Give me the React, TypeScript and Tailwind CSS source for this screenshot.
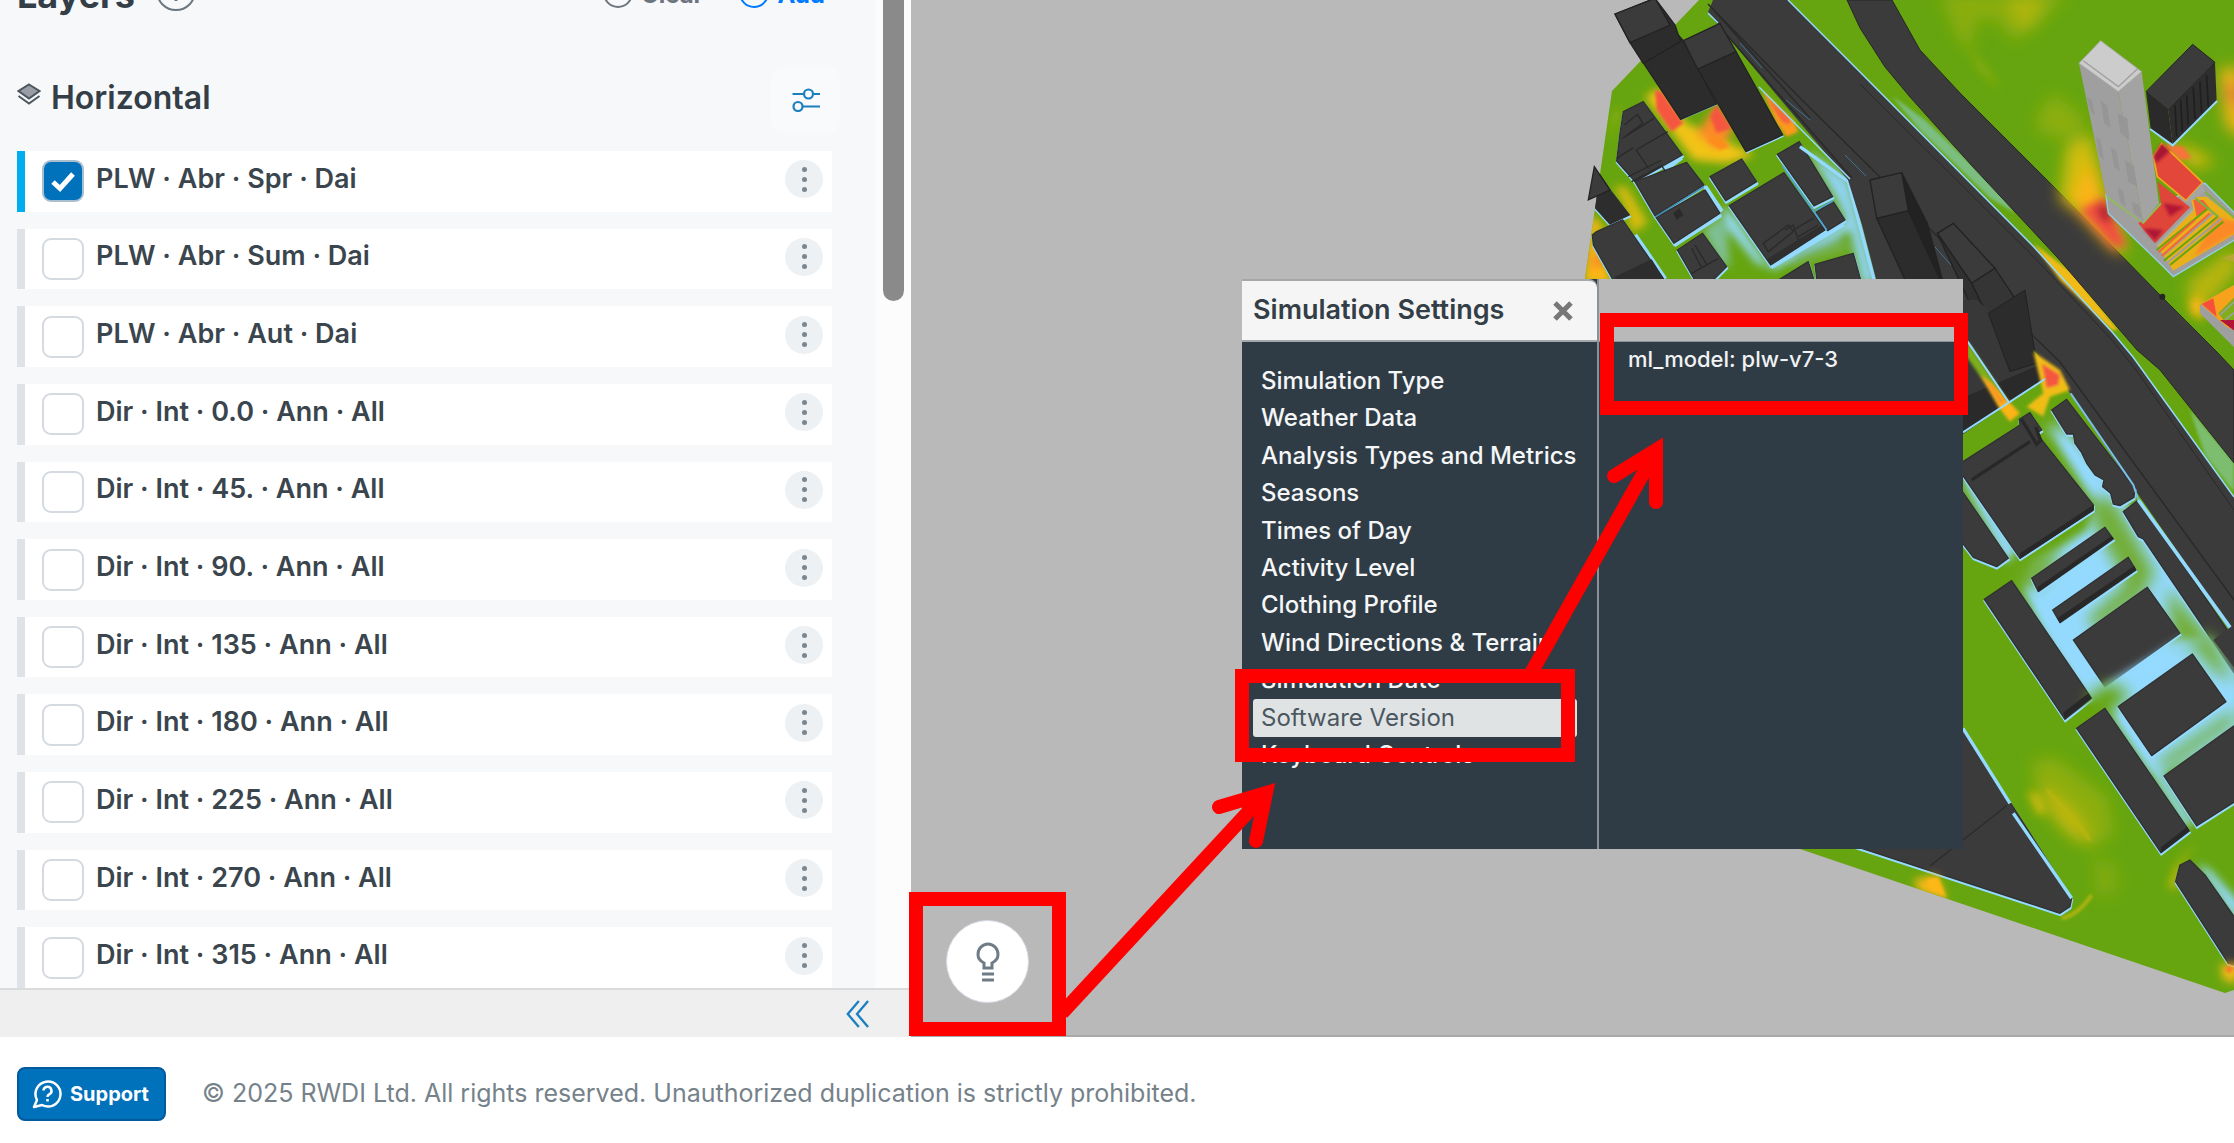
import React, { useState } from 'react';

interface Layer {
  id: string;
  label: string;
}

const LAYERS: Layer[] = [
  { id: 'plw-spr', label: 'PLW · Abr · Spr · Dai' },
  { id: 'plw-sum', label: 'PLW · Abr · Sum · Dai' },
  { id: 'plw-aut', label: 'PLW · Abr · Aut · Dai' },
  { id: 'dir-0', label: 'Dir · Int · 0.0 · Ann · All' },
  { id: 'dir-45', label: 'Dir · Int · 45. · Ann · All' },
  { id: 'dir-90', label: 'Dir · Int · 90. · Ann · All' },
  { id: 'dir-135', label: 'Dir · Int · 135 · Ann · All' },
  { id: 'dir-180', label: 'Dir · Int · 180 · Ann · All' },
  { id: 'dir-225', label: 'Dir · Int · 225 · Ann · All' },
  { id: 'dir-270', label: 'Dir · Int · 270 · Ann · All' },
  { id: 'dir-315', label: 'Dir · Int · 315 · Ann · All' },
];

const SETTINGS = [
  'Simulation Type',
  'Weather Data',
  'Analysis Types and Metrics',
  'Seasons',
  'Times of Day',
  'Activity Level',
  'Clothing Profile',
  'Wind Directions & Terrain',
  'Simulation Date',
  'Software Version',
  'Keyboard Controls',
];

// Building footprints, grouped by city quarter
const NORTH_WEST = [
  '190,335 250,305 367,465 225,545 170,483 180,400',
  '225,545 380,487 432,555 285,648',
  '288,652 435,570 480,640 342,730',
  '450,530 545,477 590,545 497,602',
  '508,617 672,518 795,690 632,795',
  '652,463 718,425 818,590 762,618',
  '768,637 820,605 855,660 803,692',
  '352,750 428,700 500,800 450,850 410,850',
  '103,500 150,570 208,645 150,672 85,600',
  '97,705 110,695 188,660 320,850 165,850 100,735',
  '640,850 745,785 765,850',
  '765,793 880,760 905,850 772,850',
];

const SOUTH_EAST = [
  '189,485 360,375 358,358 390,338 425,390 410,400 580,615 580,630 360,775 170,500',
  '455,330 500,298 705,565 702,592 660,617 640,612 632,580 608,560 612,540 585,525 560,490 545,458 525,430 520,402 500,402',
  '150,520 325,775 290,800 220,772 150,680',
  '395,835 615,682 640,717 415,875',
  '458,930 685,772 708,810 480,968',
  '670,635 715,600 1010,1030 1010,1130 730,717 715,710',
  '520,1020 742,862 840,1000 615,1160',
  '253,898 335,842 575,1195 495,1258',
];

const SOUTH = [
  '1015,200 1237,42 1338,185 1115,347',
  '1152,408 1380,245 1380,475 1250,558',
  '890,265 975,205 1228,573 1143,638',
  '1187,725 1200,675 1230,660 1275,705 1380,855 1380,980 1345,970',
  '500,190 875,775 870,800 840,820 220,617',
];

// The calm-air fringe falls to the lower side of each building
const Blocks = ({ items }: { items: string[] }) => (
  <>
    <g fill="#94daff" stroke="#94daff" strokeWidth="7" filter="url(#edge)" transform="translate(1 5)">
      {items.map((p) => (
        <polygon key={p} points={p} />
      ))}
    </g>
    <g fill="#3b3b3b" stroke="#303030" strokeWidth="4" strokeLinejoin="round">
      {items.map((p) => (
        <polygon key={p} points={p} />
      ))}
    </g>
  </>
);

const CityMap = () => (
  <svg
    className="absolute inset-0 h-full w-full"
    viewBox="911 0 1323 1037"
    preserveAspectRatio="xMaxYMin slice"
    aria-hidden="true"
  >
    <defs>
      <filter id="edge" x="-5%" y="-5%" width="110%" height="110%">
        <feGaussianBlur stdDeviation="2" />
      </filter>
      <filter id="soft" x="-30%" y="-30%" width="160%" height="160%">
        <feGaussianBlur stdDeviation="5" />
      </filter>
      <filter id="streak" x="-30%" y="-30%" width="160%" height="160%">
        <feGaussianBlur stdDeviation="1.5" />
      </filter>
      <filter id="blur" x="-50%" y="-50%" width="200%" height="200%">
        <feGaussianBlur stdDeviation="13" />
      </filter>
      <filter id="haze" x="-50%" y="-50%" width="200%" height="200%">
        <feGaussianBlur stdDeviation="22" />
      </filter>
      <clipPath id="site">
        <polygon points="1699,0 1675,25 1612,91 1585,278 1580,500 1700,815 1800,849 2225,993 2234,990 2234,0" />
      </clipPath>
    </defs>

    <g clipPath="url(#site)">
      <rect x="1560" y="0" width="674" height="1037" fill="#66a50f" />

      {/* north west quarter */}
      <g transform="translate(1560 0) scale(0.3333)">
        <g filter="url(#blur)">
          <polygon points="745,450 865,540 950,850 905,850 870,690 830,600" fill="#8fd3ee" />
          <polygon points="800,700 860,660 870,690 640,810 620,790" fill="#94daff" />
          <polygon points="485,620 515,640 625,800 590,790 500,680" fill="#94daff" />
          <polygon points="430,690 480,650 500,690 510,800 480,790" fill="#7fbf95" />
          <polygon points="700,765 840,710 870,750 700,800" fill="#74b148" />
          <polygon points="255,290 300,265 380,370 470,410 585,465 500,490 400,480 340,400" fill="#f3c313" />
          <polygon points="470,315 520,395 470,450 410,400" fill="#fb8a28" />
          <polygon points="160,560 200,560 265,670 215,700 190,610" fill="#d7bb10" />
          <polygon points="90,640 140,690 100,700 160,850 70,850" fill="#fdb813" />
          <polygon points="95,750 130,790 100,810" fill="#fb7a2c" />
          <polygon points="155,340 190,320 160,400 150,430" fill="#86ab0f" />
        </g>
        <g filter="url(#soft)">
          <polygon points="285,270 305,275 370,370 335,395 290,330" fill="#f4573f" />
          <polygon points="468,315 515,385 470,400 450,350" fill="#f4573f" />
          <polygon points="440,420 475,405 510,440 480,450" fill="#fd8d1f" />
          <polygon points="605,270 700,360 715,395 680,410 650,370" fill="#fb9a1e" />
          <polygon points="618,290 690,355 690,375 665,365" fill="#f4663a" />
        </g>
        <polyline points="365,357 470,313" stroke="#94daff" strokeWidth="5" />
        <polyline points="558,457 670,407" stroke="#94daff" strokeWidth="7" />
        <polyline points="312,512 365,472" stroke="#94daff" strokeWidth="14" />
        <polyline points="342,735 482,645" stroke="#94daff" strokeWidth="14" />
        <polyline points="497,606 592,549" stroke="#94daff" strokeWidth="12" />
        <polyline points="632,800 850,672" stroke="#94daff" strokeWidth="16" />
        <polyline points="435,560 485,635" stroke="#94daff" strokeWidth="14" filter="url(#edge)" />
        <polyline points="225,705 315,837" stroke="#94daff" strokeWidth="14" filter="url(#edge)" />
        <Blocks items={NORTH_WEST} />
        <g fill="none" stroke="#2a2a2a" strokeWidth="4">
          <path d="M187 415l95-60M193 375l40-32 15 27-60 45M228 450l95-55M228 450l38 55M170 475l50-32M215 545l90-48 12 18M205 530l100-50" />
          <path d="M610 730l75-55 15 20-75 60zM675 690l25-15 15 45M700 690l60-35M715 710l60-35" />
          <path d="M395 745l30 58M405 735l35 58M395 820l80-45" />
        </g>
        <polygon points="340,640 358,625 370,645 350,660" fill="#2a2a2a" />
        <polygon points="620,778 785,676 795,690 632,795" fill="#2f2f2f" />
        <polygon points="85,600 145,566 208,645 150,672" fill="#2d2d2d" />
        <polygon points="165,830 275,778 320,850 165,850" fill="#2d2d2d" />
        <polyline points="288,650 432,560" stroke="#3f8db5" strokeWidth="4" />
        <polyline points="668,498 800,690" stroke="#4ea7d8" strokeWidth="5" />
        <polyline points="765,632 820,602" stroke="#4ea7d8" strokeWidth="5" />
        <polyline points="720,440 865,545 945,850" fill="none" stroke="#94daff" strokeWidth="10" />
      </g>

      {/* rail corridor and main road */}
      <polygon
        points="1713,0 1788,0 1860,72 2032,245 2113,333 2133,357 2234,497 2234,633 2133,487 2070,393 2033,350 1963,400 1900,300 1876,279 1862,225 1848,180 1718,25 1708,12"
        fill="#3b3b3b"
      />
      <g fill="none" stroke="#2a2a2a" strokeWidth="1.500">
        <path d="M1708 4L1800 98 1880 177M1718 25L1852 178M1712 8L1760 62 1810 118" />
        <path d="M1860 84L2030 253 2112 340 2136 370 2234 510" strokeWidth="1" />
        <path d="M2025 328L2060 362 2234 600" />
        <path d="M1928 227L2000 300" />
      </g>
      <path d="M1740 43L1762 68M1786 100L1810 120M1845 155L1866 176M1935 247L1951 265" stroke="#3f7390" strokeWidth="1" fill="none" />
      <path d="M1708 13L1718 23M1759 87L1850 179" stroke="#94daff" strokeWidth="1.500" fill="none" />
      <g filter="url(#streak)">
        <polygon points="1892,96 1925,120 2000,192 2015,213 1990,198 1920,130" fill="#7cbd80" />
        <polygon points="2033,243 2075,275 2118,330 2112,330 2060,280" fill="#f0bb12" />
        <polygon points="2190,410 2234,462 2234,492 2205,455" fill="#7cbd70" />
      </g>
      <polygon
        points="1847,0 1892,0 1920,50 1960,93 2067,200 2160,295 2215,350 2234,370 2234,463 2160,370 2137,350 2057,257 1973,167 1910,97 1885,67 1860,28"
        fill="#3b3b3b"
        stroke="#272727"
        strokeWidth="1"
      />
      <polyline points="1788,0 1860,72 2032,245 2113,333 2133,357 2234,497" fill="none" stroke="#94daff" strokeWidth="1.500" />

      {/* twin towers */}
      <g transform="translate(1560 0) scale(0.3333)" stroke="#232323" strokeWidth="4" strokeLinejoin="round">
        <polygon points="210,128 328,75 370,122 470,312 362,358" fill="#2c2c2c" />
        <polygon points="165,42 285,-5 330,75 210,128" fill="#3b3b3b" />
        <polygon points="413,207 528,155 668,405 558,455" fill="#2c2c2c" />
        <polygon points="370,122 480,70 528,155 413,207" fill="#3b3b3b" />
      </g>

      {/* park haze and landmark tower */}
      <g transform="translate(1860 0) scale(0.3333)">
        <g filter="url(#haze)">
          <polygon points="240,-20 620,-20 520,90 460,120 410,60 350,60 330,150 290,110" fill="#8aad10" />
          <polygon points="440,0 550,-20 530,60 480,90" fill="#adb60f" />
          <polygon points="530,350 580,280 680,360 640,420 540,400" fill="#8bae10" />
          <polygon points="620,440 690,400 740,590 660,640 600,600" fill="#d2bd0e" />
          <polygon points="690,480 730,590 800,760 760,750 630,610" fill="#fdb414" />
          <polygon points="1080,210 1140,200 1160,420 1100,380" fill="#fbb515" />
          <polygon points="1085,260 1150,260 1140,330" fill="#f4663a" />
          <polygon points="920,430 1000,450 1070,490 1000,500" fill="#e8bd10" />
          <polygon points="980,850 1120,740 1140,800 1040,920 1000,950" fill="#b9b50f" />
        </g>
        <g filter="url(#blur)">
          <polygon points="660,630 735,590 800,740 760,740" fill="#f0503f" />
          <polygon points="710,620 740,610 760,670 725,660" fill="#ad1233" />
          <polygon points="290,60 340,160 390,215 420,270 350,200" fill="#8aad10" />
          <polygon points="990,900 1025,890 1030,960 995,940" fill="#fdb813" />
        </g>
        <polygon points="910,432 970,440 995,475 960,480" fill="#f7733a" filter="url(#soft)" />
        <polyline points="872,385 938,434 1070,302" fill="none" stroke="#94daff" strokeWidth="10" />
        <polygon points="858,275 925,330 938,432 872,385" fill="#2a2a2a" />
        <polygon points="925,330 1065,187 1070,300 938,432" fill="#2e2e2e" />
        <path d="M945 315l5 95M962 300l5 95M980 285l5 90M1000 262l5 95M1020 245l5 95M1040 225l5 95" stroke="#1f1f1f" strokeWidth="5" />
        <polygon points="858,275 998,133 1065,187 925,330" fill="#3b3b3b" stroke="#232323" strokeWidth="3" />

        <polygon points="738,585 850,668 990,560 1035,550 1140,655 1140,710 940,830 900,790 745,640" fill="#9f9f9f" stroke="#8fd0e8" strokeWidth="4" />
        <polygon points="890,735 1000,625 990,590 1040,590 1135,665 1135,695 940,812" fill="#e9b01a" />
        <polygon points="1070,650 1140,670 1140,690 1000,770" fill="#fb8a28" filter="url(#soft)" />
        <polygon points="1000,600 1030,600 1050,625 1010,650" fill="#f4603c" />
        <g strokeWidth="6" fill="none">
          <path d="M900 775L1060 640M920 790L1085 655" stroke="#9f9f9f" />
          <path d="M890 750L1045 625M912 782L1075 648M930 795L1090 665" stroke="#66a50f" />
          <path d="M895 757L1005 660M905 768L1050 640" stroke="#f4663a" />
          <path d="M892 737L1000 628" stroke="#9fb0b0" />
          <path d="M1000 590L1075 650M1035 575L1130 660" stroke="#7fb040" />
        </g>
        <polygon points="905,430 1028,548 978,602 892,530 880,468" fill="#e2473a" stroke="#f3a91b" strokeWidth="5" />
        <polygon points="905,430 930,452 890,490 880,468" fill="#a81535" filter="url(#soft)" />
        <polygon points="1028,548 1035,575 985,608 978,602" fill="#a5a5a5" />
        <polygon points="893,545 990,622 885,730 835,670 903,610" fill="#e0453a" />
        <polygon points="910,610 975,620 930,650" fill="#b21836" filter="url(#soft)" />
        <polygon points="850,685 910,690 885,722" fill="#ad1635" filter="url(#soft)" />
        <polyline points="740,590 850,668 903,610" fill="none" stroke="#8fc04a" strokeWidth="6" />

        <polygon points="657,190 775,275 850,668 738,585" fill="#9f9f9f" />
        <polygon points="775,275 845,215 897,610 850,668" fill="#a3a3a3" />
        <g fill="#969696">
          <polygon points="722,300 742,318 752,385 732,368" />
          <polygon points="772,340 802,355 808,420 782,400" />
          <polygon points="752,440 770,455 780,515 762,500" />
          <polygon points="795,480 822,498 832,560 805,545" />
          <polygon points="773,560 790,575 798,620 780,605" />
          <polygon points="815,605 838,615 845,655 822,640" />
          <polygon points="680,290 695,300 705,345 692,335" />
          <polygon points="708,410 722,420 732,480 718,468" />
        </g>
        <polygon points="657,190 722,122 845,215 775,275" fill="#cccccc" stroke="#a9a9a9" strokeWidth="3" />
        <polyline points="670,182 775,260 832,207" fill="none" stroke="#9f9f9f" strokeWidth="4" />

        <polygon points="1020,915 1140,845 1140,1060 1020,940" fill="#9f9f9f" />
        <polygon points="1022,912 1140,845 1140,1000 1100,980" fill="#f7a11c" />
        <polygon points="1025,912 1060,895 1070,950" fill="#f4503c" />
        <polygon points="1075,940 1140,875 1140,960 1095,965" fill="#7fae1a" />
        <polygon points="1080,960 1140,960 1140,1005" fill="#b01535" />
        <path d="M1080 945l60-55M1095 960l50-40" stroke="#9f9f9f" strokeWidth="5" />
        <polygon points="1085,775 1140,755 1140,790" fill="#b5a832" />
        <circle cx="907" cy="890" r="9" fill="#262626" />

        {/* corridor towers */}
        <g stroke="#222222" strokeWidth="4" strokeLinejoin="round">
          <polygon points="125,518 202,670 250,850 200,850 145,632" fill="#222222" />
          <polygon points="50,655 145,632 245,850 140,850" fill="#2c2c2c" />
          <polygon points="30,540 125,518 145,632 50,655" fill="#3b3b3b" />
          <polygon points="232,700 280,670 405,805 335,850" fill="#3b3b3b" />
          <polygon points="232,700 335,850 382,945 360,975" fill="#303030" />
          <polygon points="335,850 405,805 465,895 382,945" fill="#353535" />
        </g>
      </g>

      {/* south east quarter */}
      <g transform="translate(1900 300) scale(0.3333)">
        <polygon points="150,0 230,0 400,150 435,235 150,430" fill="#383838" />
        <polygon points="150,310 430,190 435,235 150,425" fill="#2a2a2a" />
        <polygon points="265,40 375,-30 405,160 425,185 330,215" fill="#2c2c2c" stroke="#222222" strokeWidth="3" />
        <polygon points="150,430 435,237 400,150 515,290 455,345 400,400 150,500" fill="#66a50f" />
        <g filter="url(#soft)">
          <polygon points="200,120 315,290 290,300 200,170" fill="#7dae1a" />
          <polygon points="240,225 275,250 360,340 330,365 295,320" fill="#fdb414" />
          <polygon points="255,235 280,260 315,310 300,310" fill="#fb8a28" />
          <polygon points="400,155 480,210 510,270 450,290 430,350 380,320 430,280" fill="#f0bd12" />
          <polygon points="425,190 480,225 475,255 440,265" fill="#f4573f" />
        </g>
        <path d="M203 125L325 305M189 397L435 237" stroke="#94daff" strokeWidth="6" />
        <g filter="url(#blur)">
          <polygon points="440,380 480,370 720,660 1010,1060 1010,1200 900,1200 560,1200 430,1000 370,870 410,790 560,690 590,620" fill="#94daff" />
          <polygon points="189,540 210,520 350,750 320,790" fill="#94daff" />
        </g>
        <g filter="url(#haze)" fill="#72ad35">
          <polygon points="570,590 640,600 710,720 770,830 690,870 630,760 580,670" />
          <polygon points="400,770 490,750 420,860 340,860" />
          <polygon points="560,960 700,830 750,870 590,990" />
          <polygon points="800,860 920,1000 890,1070 820,1030" />
          <polygon points="425,360 480,350 490,400 440,400" />
        </g>
        <Blocks items={SOUTH_EAST} />
        <path d="M215 540L390 425M365 358l45 75 12-12-15-40" stroke="#282828" strokeWidth="10" fill="none" />
        <polygon points="360,760 580,615 580,632 360,777" fill="#282828" />
        <polygon points="412,862 635,708 640,717 415,875" fill="#282828" />
        <polygon points="472,955 703,798 708,810 480,968" fill="#282828" />
        <path d="M512 280L700 555 715 600 1010 1010" fill="none" stroke="#79bfe6" strokeWidth="6" />
        <path d="M715 600L1010 1010" fill="none" stroke="#94daff" strokeWidth="11" />
      </g>

      {/* south quarter */}
      <g transform="translate(1780 640) scale(0.3333)">
        <g filter="url(#blur)">
          <polygon points="950,150 1200,0 1290,0 1380,130 1380,300 1150,400 1110,400 990,220" fill="#94daff" />
          <polygon points="1110,390 1150,400 1240,550 1215,560" fill="#94daff" />
          <polygon points="1250,670 1290,690 1380,790 1380,860" fill="#94daff" />
        </g>
        <g filter="url(#haze)">
          <polygon points="920,170 990,130 1050,160 960,250" fill="#66a50f" />
          <polygon points="1180,30 1290,-20 1360,130 1300,90 1240,20" fill="#72ad35" />
          <polygon points="1130,370 1362,210 1362,250 1160,390" fill="#72ad35" />
          <polygon points="755,370 820,350 980,470 1000,580 940,620 880,590 780,500" fill="#8dae10" />
          <polygon points="780,430 820,460 890,520 940,620 870,590 820,530" fill="#c3b80f" />
          <polygon points="940,650 1010,680 1010,760 950,770" fill="#80ab10" />
        </g>
        <g filter="url(#blur)">
          <polygon points="740,452 780,465 800,520 775,525" fill="#cbba0e" />
          <polygon points="1185,680 1250,605 1200,680 1190,750 1165,740" fill="#c3b80f" />
        </g>
        <path d="M800 450q60 60 130 150M845 835q50-10 90-70" stroke="#b9b50e" strokeWidth="10" fill="none" filter="url(#soft)" />
        <Blocks items={SOUTH} />
        <polygon points="1143,622 1222,560 1228,573 1143,638" fill="#282828" />
        <polygon points="850,218 925,160 935,175 855,235" fill="#282828" />
        <path d="M450 678L680 497" stroke="#2c2c2c" strokeWidth="4" />
        <path d="M549 265L690 490M700 520L875 775" stroke="#94daff" strokeWidth="10" filter="url(#edge)" />
        <polygon points="1300,0 1380,-60 1380,105" fill="#3b3b3b" />
        <polygon points="400,720 470,705 500,780 420,755" fill="#fdb813" filter="url(#blur)" />
        <polygon points="440,718 475,712 500,775 455,750" fill="#fdb813" filter="url(#soft)" />
        <polygon points="1320,975 1380,970 1370,1030 1330,1020" fill="#f5b914" filter="url(#blur)" />
        <circle cx="1348" cy="988" r="10" fill="#fb7a2c" filter="url(#soft)" />
      </g>
    </g>
    {/* first tower reaches over the edge of the site */}
    <g transform="translate(1560 0) scale(0.3333)" stroke="#232323" strokeWidth="4">
      <polygon points="165,42 285,-5 345,75 362,125 250,190 210,128" fill="#2c2c2c" />
      <polygon points="165,42 285,-5 330,75 210,128" fill="#3b3b3b" />
      <polygon points="103,500 150,570 85,600" fill="#3b3b3b" />
    </g>
  </svg>
);

const SettingsPanel = () => {
  const [active, setActive] = useState('Software Version');

  return (
    <section className="absolute left-[331px] top-[279px] flex h-[570px] w-[721px] bg-[#b9b9b9]">
      <div className="flex w-[357px] shrink-0 flex-col border-r-2 border-[#8b9297] bg-[#2f3c45]">
        <header className="flex h-[63px] shrink-0 items-center justify-between rounded-tr-lg border-b-2 border-t-2 border-[#a5a8aa] bg-[#f5f5f5] pl-[11px] pr-5">
          <h2 className="text-[27px] font-semibold text-[#333e47]">Simulation Settings</h2>
          <button aria-label="Close settings" className="p-1">
            <svg className="h-5 w-5" viewBox="0 0 20 20" stroke="#777777" strokeWidth="5">
              <path d="M2 2l16 16M18 2L2 18" />
            </svg>
          </button>
        </header>
        <ul className="flex flex-1 flex-col pb-[75px] pl-[11px] pr-5 pt-5">
          {SETTINGS.map((name) => (
            <li key={name} className="flex flex-1">
              <button
                onClick={() => setActive(name)}
                className={`w-full whitespace-nowrap rounded-[3px] pl-2 text-left text-2xl ${
                  name === active ? 'bg-[#e0e3e4] text-[#4a5760]' : 'font-medium text-[#f5f6f7]'
                }`}
              >
                {name}
              </button>
            </li>
          ))}
        </ul>
      </div>
      <div className="mt-[62px] flex-1 border-t border-[#8b9297] bg-[#2f3c45] px-[29px] text-[22px] font-medium leading-[34px] text-[#f0f2f3]">
        ml_model: plw-v7-3
      </div>
    </section>
  );
};

// Red boxes and arrows drawn over the map
const Annotations = () => (
  <>
    <div className="pointer-events-none absolute left-[-2px] top-[892px] h-36 w-[157px] border-[14px] border-[#ff0000]" />
    <div className="pointer-events-none absolute left-[324px] top-[669px] h-[93px] w-[340px] border-[14px] border-[#ff0000]" />
    <div className="pointer-events-none absolute left-[689px] top-[313px] h-[102px] w-[368px] border-[14px] border-[#ff0000]" />
    <svg
      className="pointer-events-none absolute left-0 top-0 h-[1037px] w-[1100px]"
      viewBox="911 0 1100 1037"
      fill="none"
      stroke="#ff0000"
      strokeWidth="14"
      aria-hidden="true"
    >
      <path d="M1062 1013L1263 796" />
      <path d="M1219 807L1266 793 1256 841" strokeLinecap="round" strokeMiterlimit="10" />
      <path d="M1530 675L1652 458" />
      <path d="M1614 476L1656 450 1656 502" strokeLinecap="round" strokeMiterlimit="10" />
    </svg>
  </>
);

const App: React.FC = () => {
  const [selected, setSelected] = useState<string[]>(['plw-spr']);

  const toggle = (id: string) => {
    setSelected((prev) => (prev.includes(id) ? prev.filter((x) => x !== id) : [...prev, id]));
  };

  return (
    <div className="flex h-screen min-h-[1143px] flex-col overflow-hidden bg-white font-['Inter',sans-serif]">
      <div className="flex flex-1">
        <aside className="flex w-[911px] shrink-0 flex-col">
          <div className="flex flex-1 bg-[#f7f8fa]">
            <div className="flex flex-1 flex-col pl-[17px]">
              <div className="-mt-7 flex h-[46px] items-center justify-between pr-[50px]">
                <div className="flex items-center gap-5">
                  <h1 className="text-4xl font-bold leading-none text-[#333e47]">Layers</h1>
                  <svg className="mb-2 h-[42px] w-[42px]" viewBox="0 0 42 42" fill="none" stroke="#6b777f" strokeWidth="2" aria-hidden="true">
                    <circle cx="21" cy="21" r="19" />
                    <path d="M21 18v13" strokeWidth="3" />
                  </svg>
                </div>
                <div className="flex gap-9 text-2xl font-bold leading-none">
                  <button className="flex items-center gap-2 text-[#6c757d]">
                    <svg className="mb-1 h-[30px] w-[30px]" viewBox="0 0 30 30" fill="none" stroke="currentColor" strokeWidth="2">
                      <circle cx="15" cy="15" r="14" />
                      <path d="M10 10l10 10M20 10L10 20" />
                    </svg>
                    Clear
                  </button>
                  <button className="flex items-center gap-2 text-[#007bff]">
                    <svg className="mb-1 h-[30px] w-[30px]" viewBox="0 0 30 30" fill="none" stroke="currentColor" strokeWidth="2">
                      <circle cx="15" cy="15" r="14" />
                      <path d="M15 8v14M8 15h14" />
                    </svg>
                    Add
                  </button>
                </div>
              </div>

              <div className="mb-[18px] mt-[49px] flex h-[66px] items-center pr-[35px]">
                <svg className="mb-3 h-[23px] w-6" viewBox="0 0 24 23" fill="none" stroke="#4b565e" strokeWidth="2" aria-hidden="true">
                  <path d="M12 1.500L22.500 8 12 15.500 1.500 8z" fill="#9a9da6" />
                  <path d="M1.500 13L12 20.500 22.500 13" />
                </svg>
                <h2 className="mb-1 ml-[10px] text-[32px] font-semibold leading-none text-[#333e47]">Horizontal</h2>
                <button aria-label="Layer filters" className="ml-auto flex h-[66px] w-[69px] items-center justify-center rounded-xl bg-[#f9fafb]">
                  <svg className="h-6 w-7" viewBox="0 0 28 24" fill="none" stroke="#1a7fc0" strokeWidth="2.200">
                    <path d="M0.500 6h11M22 6h6M11 18.500h17" />
                    <circle cx="16.500" cy="6" r="4.500" />
                    <circle cx="6" cy="18.500" r="4.500" />
                  </svg>
                </button>
              </div>

              <ul className="flex flex-1 flex-col gap-[17px] pr-[43px]">
                {LAYERS.map(({ id, label }) => {
                  const checked = selected.includes(id);
                  return (
                    <li
                      key={id}
                      className={`flex flex-1 items-center border-l-8 bg-white pl-[17px] pr-[9px] ${
                        checked ? 'border-[#00aeef]' : 'border-[#dfe3e7]'
                      }`}
                    >
                      <span className="grid shrink-0">
                        <input
                          id={id}
                          type="checkbox"
                          checked={checked}
                          onChange={() => toggle(id)}
                          className="col-start-1 row-start-1 h-[42px] w-[42px] appearance-none rounded-[9px] border-2 border-[#d5dae0] bg-white checked:border-[#a9bfd0] checked:bg-[#0072bc]"
                        />
                        {checked && (
                          <svg
                            className="pointer-events-none col-start-1 row-start-1 h-6 w-6 place-self-center"
                            viewBox="0 0 24 24"
                            fill="none"
                            stroke="#fff"
                            strokeWidth="5"
                          >
                            <path d="M2 13l7 6.500L22 5" />
                          </svg>
                        )}
                      </span>
                      <label htmlFor={id} className="mb-1.5 ml-3 flex-1 text-[27px] font-semibold leading-none text-[#3a454d]">
                        {label}
                      </label>
                      <button
                        aria-label={`Options for ${label}`}
                        className="mb-1 flex h-[38px] w-[38px] flex-col items-center justify-center gap-[5px] rounded-full bg-[#edf1f4]"
                      >
                        <span className="h-[5px] w-[5px] rounded-full bg-[#7b868e]" />
                        <span className="h-[5px] w-[5px] rounded-full bg-[#7b868e]" />
                        <span className="h-[5px] w-[5px] rounded-full bg-[#7b868e]" />
                      </button>
                    </li>
                  );
                })}
              </ul>
            </div>
            <div className="flex w-9 justify-center bg-[#fcfcfc]">
              <div className="h-[301px] w-[21px] rounded-b-full bg-[#8a8a8a]" />
            </div>
          </div>
          <div className="flex h-[49px] items-center justify-end border-t-2 border-[#d9dbdc] bg-[#efefef] pr-[42px]">
            <button aria-label="Collapse sidebar">
              <svg className="h-7 w-6" viewBox="0 0 26 30" fill="none" stroke="#1a7fc0" strokeWidth="2.500">
                <path d="M15 1L3 15l12 14M25 1L13 15l12 14" />
              </svg>
            </button>
          </div>
        </aside>

        <main className="relative flex-1 border-b-2 border-[#a9a9a9] bg-[#b9b9b9]">
          <CityMap />
          <button
            aria-label="Simulation settings"
            className="absolute left-[35px] top-[920px] flex h-[83px] w-[83px] items-center justify-center rounded-full border border-[#d5dae4] bg-white"
          >
            <svg className="h-10 w-6" viewBox="0 0 24 40" fill="none" stroke="#6f7c85" strokeWidth="3">
              <path d="M8 26v-5C4 19 2 16 2 12.500a10 10.500 0 0 1 20 0c0 3.500-2 6.500-6 8.500v5z" />
              <path d="M6 32h12M6 38h12" />
            </svg>
          </button>
          <SettingsPanel />
          <Annotations />
        </main>
      </div>

      <footer className="flex h-[106px] shrink-0 items-center gap-9 px-[17px] pt-2">
        <button className="flex h-[54px] w-[149px] items-center gap-2 rounded-lg border-2 border-[#005a9c] bg-[#0072bc] pl-[13px] text-xl font-bold text-white">
          <svg className="h-[30px] w-[30px]" viewBox="0 0 30 30" fill="none" stroke="#fff" strokeWidth="2.500" strokeLinejoin="round">
            <path d="M2 28l3-7a12.500 12.500 0 1 1 5 5z" />
            <path d="M11.500 11.500a4 4 0 1 1 5.500 4c-1.200.5-1.500 1.200-1.500 2.500M15.500 20v2.500" />
          </svg>
          Support
        </button>
        <p className="text-[25px] text-[#76828a]">
          © 2025 RWDI Ltd. All rights reserved. Unauthorized duplication is strictly prohibited.
        </p>
      </footer>
    </div>
  );
};

export default App;
